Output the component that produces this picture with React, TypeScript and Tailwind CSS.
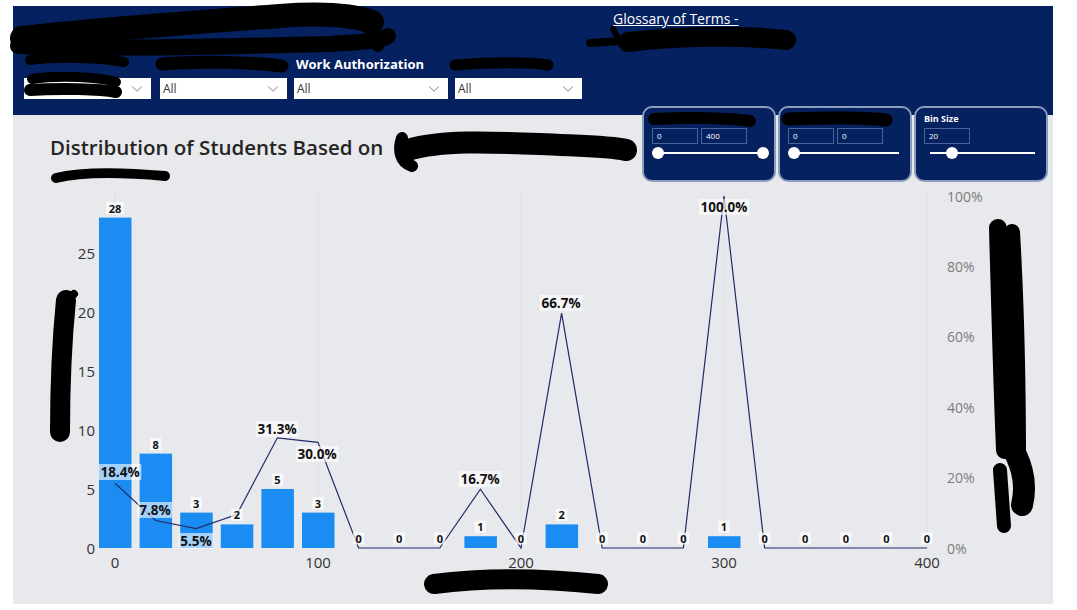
import React from "react";
import { ChevronDown } from "lucide-react";

// histogram data: bin size 20, bins 0..400
const counts = [28, 8, 3, 2, 5, 3, 0, 0, 0, 1, 0, 2, 0, 0, 0, 1, 0, 0, 0, 0, 0];
const pcts = [18.4, 7.8, 5.5, 9.5, 31.3, 30.0, 0, 0, 0, 16.7, 0, 66.7, 0, 0, 0, 100, 0, 0, 0, 0, 0];

// percent labels (page coords of label centre)
const pctLabels = [
  { t: "18.4%", x: 120, y: 472 },
  { t: "7.8%", x: 155, y: 510 },
  { t: "5.5%", x: 196, y: 541 },
  { t: "31.3%", x: 277, y: 429 },
  { t: "30.0%", x: 317, y: 454 },
  { t: "16.7%", x: 480, y: 479 },
  { t: "66.7%", x: 561, y: 303 },
  { t: "100.0%", x: 724, y: 207 },
];

// chart svg sits at page (13,185)
const OX = 13;
const OY = 185;
const X0 = 115 - OX;
const STEP = 40.6;
const BASE = 548 - OY;
const UNIT = 11.8;
const PU = 3.52;
const bx = (i: number) => X0 + STEP * i;
const py = (p: number) => BASE - p * PU;

const textW = (s: string, size: number) => {
  let w = 0;
  for (const c of s) {
    if (c === ".") w += 0.28;
    else if (c === "%") w += 0.84;
    else w += 0.58;
  }
  return w * size;
};

const Dropdown = ({ w, label }: { w: number; label?: string }) => (
  <div
    className="h-[21px] bg-white flex items-center justify-between pl-[3px] pr-[5px]"
    style={{ width: w }}
  >
    <span className="text-[12px] text-[#333] leading-none">{label}</span>
    <ChevronDown size={18} strokeWidth={1} className="text-[#555]" />
  </div>
);

const SliderCard = ({
  title,
  values,
  knobs,
  padLeft,
}: {
  title?: string;
  values: string[];
  knobs: number[];
  padLeft: number;
}) => (
  <div className="w-[134px] h-[76px] rounded-[10px] border-2 border-[#8c9dbd] bg-[#05215f] pt-[5px]">
    <div className="h-[12px] text-[9px] leading-[12px] font-bold text-white" style={{ paddingLeft: padLeft }}>
      {title}
    </div>
    <div className="mt-[3px] flex gap-[3px]" style={{ paddingLeft: padLeft }}>
      {values.map((v, i) => (
        <div
          key={i}
          className="w-[46px] h-[16px] border border-[#4a639b] text-[8px] leading-[14px] text-white pl-[4px]"
        >
          {v}
        </div>
      ))}
    </div>
    <div className="mt-[3px] ml-[14px] w-[105px] h-[12px] relative">
      <div className="absolute left-0 right-0 top-[5px] h-[1.5px] bg-white" />
      {knobs.map((k, i) => (
        <div
          key={i}
          className="absolute top-0 w-[12px] h-[12px] rounded-full bg-white -ml-[6px]"
          style={{ left: `${k * 100}%` }}
        />
      ))}
    </div>
  </div>
);

const Chart = () => (
  <svg width={1040} height={400} className="block" fontFamily="Open Sans, sans-serif">
    {/* gridlines */}
    {[0, 5, 10, 15, 20].map((i) => (
      <line key={i} x1={bx(i)} x2={bx(i)} y1={4} y2={BASE} stroke="#dcdee2" strokeWidth={1} />
    ))}
    {/* bars */}
    {counts.map((c, i) =>
      c > 0 ? (
        <rect key={i} x={bx(i) - 16} y={BASE - c * UNIT} width={32.5} height={c * UNIT} fill="#1b8df2" />
      ) : null
    )}
    {/* line */}
    <polyline
      points={pcts.map((p, i) => `${bx(i)},${py(p)}`).join(" ")}
      fill="none"
      stroke="#24296b"
      strokeWidth={1.2}
      strokeLinejoin="miter"
    />
    {/* count labels */}
    {counts.map((c, i) => {
      const s = String(c);
      const w = textW(s, 11) + 5;
      const cy = BASE - c * UNIT - 9.5;
      return (
        <g key={i}>
          <rect x={bx(i) - w / 2} y={cy - 6} width={w} height={12} fill="#ffffff" fillOpacity={0.7} />
          <text x={bx(i)} y={cy} textAnchor="middle" dominantBaseline="central" fontSize={11} fontWeight={700} fill="#111">
            {s}
          </text>
        </g>
      );
    })}
    {/* percent labels */}
    {pctLabels.map((l, i) => {
      const w = textW(l.t, 13.5) + 4;
      const x = l.x - OX;
      const y = l.y - OY;
      return (
        <g key={i}>
          <rect x={x - w / 2} y={y - 8} width={w} height={16} fill="#ffffff" fillOpacity={0.6} />
          <text x={x} y={y} textAnchor="middle" dominantBaseline="central" fontSize={13.5} fontWeight={700} fill="#111">
            {l.t}
          </text>
        </g>
      );
    })}
    {/* left axis */}
    {[0, 5, 10, 15, 20, 25].map((v) => (
      <text key={v} x={95 - OX} y={BASE - v * UNIT} textAnchor="end" dominantBaseline="central" fontSize={15} fill="#333">
        {v}
      </text>
    ))}
    {/* x axis */}
    {[0, 100, 200, 300, 400].map((v, k) => (
      <text key={v} x={bx(k * 5)} y={562 - OY} textAnchor="middle" dominantBaseline="central" fontSize={15} fill="#333">
        {v}
      </text>
    ))}
    {/* right axis */}
    {[0, 20, 40, 60, 80, 100].map((v) => (
      <text key={v} x={947 - OX} y={py(v)} dominantBaseline="central" fontSize={14} fill="#7d7d7d">
        {v}%
      </text>
    ))}
  </svg>
);

// black marker redactions drawn over the screenshot
const Redactions = () => (
  <svg className="absolute inset-0 pointer-events-none" width={1077} height={610}>
    <g stroke="#000" strokeLinecap="round" strokeLinejoin="round" fill="none">
      <path d="M22 38 C 90 30, 200 22, 280 16 C 320 13, 350 14, 372 22" strokeWidth={24} />
      <path d="M18 46 C 110 50, 230 46, 330 44 C 360 42, 380 42, 388 36" strokeWidth={16} />
      <path d="M340 14 C 360 16, 372 30, 378 46" strokeWidth={12} />
      <path d="M30 60 C 60 56, 100 58, 124 62" strokeWidth={10} />
      <path d="M32 79 C 60 75, 100 77, 116 82" strokeWidth={10} />
      <path d="M30 90 C 60 88, 100 89, 116 92" strokeWidth={12} />
      <path d="M162 64 C 200 61, 250 62, 282 66" strokeWidth={13} />
      <path d="M455 65 C 490 62, 530 62, 548 65" strokeWidth={11} />
      <path d="M590 43 C 620 41, 640 40, 660 39" strokeWidth={8} />
      <path d="M628 42 C 680 36, 740 35, 786 40" strokeWidth={20} />
      <path d="M613 29 L 618 38" strokeWidth={6} />
      <path d="M408 150 C 440 140, 490 142, 540 144 C 580 146, 610 146, 626 150" strokeWidth={22} />
      <path d="M402 138 C 398 150, 400 162, 412 166" strokeWidth={12} />
      <path d="M56 178 C 80 172, 120 172, 165 176" strokeWidth={10} />
      <path d="M66 300 C 62 340, 60 380, 60 432" strokeWidth={20} />
      <path d="M70 298 L 74 294" strokeWidth={8} />
      <path d="M998 228 C 1000 300, 1002 380, 1005 450" strokeWidth={18} />
      <path d="M1012 232 C 1016 300, 1018 380, 1018 460" strokeWidth={16} />
      <path d="M1008 440 C 1020 460, 1028 480, 1022 505" strokeWidth={22} />
      <path d="M1000 470 L 1004 526" strokeWidth={14} />
      <path d="M434 584 C 480 578, 540 578, 598 584" strokeWidth={20} />
      <path d="M654 119 C 690 117, 730 118, 750 121" strokeWidth={12} />
      <path d="M788 119 C 830 117, 870 118, 886 120" strokeWidth={13} />
    </g>
  </svg>
);

export default function App() {
  return (
    <div className="relative w-[1077px] h-[610px] bg-white overflow-hidden font-['Open_Sans',sans-serif]">
      <div className="ml-[13px] pt-[6px] w-[1040px]">
        {/* banner */}
        <div className="h-[109px] bg-[#05215f] flex flex-col">
          <div className="h-[48px] pl-[600px]">
            <span className="text-white text-[14px] leading-[22px] underline">Glossary of Terms -</span>
          </div>
          <div className="h-[22px] pl-[283px] flex items-center">
            <span className="text-white text-[13px] font-bold">Work Authorization</span>
          </div>
          <div className="mt-[2px] pl-[11px] flex">
            <Dropdown w={127} />
            <div className="ml-[9px]">
              <Dropdown w={127} label="All" />
            </div>
            <div className="ml-[7px]">
              <Dropdown w={154} label="All" />
            </div>
            <div className="ml-[7px]">
              <Dropdown w={127} label="All" />
            </div>
          </div>
        </div>
        {/* report canvas */}
        <div className="bg-[#e8e9ed] h-[489px]">
          <div className="flex h-[70px]">
            <h1 className="pl-[37px] pt-[19px] text-[20.5px] leading-[26px] font-semibold text-[#252423]">
              Distribution of Students Based on
            </h1>
            <div className="ml-auto mr-[5px] -mt-[9px] flex gap-[2px] h-[76px]">
              <SliderCard values={["0", "400"]} knobs={[0, 1]} padLeft={8} />
              <SliderCard values={["0", "0"]} knobs={[0]} padLeft={8} />
              <SliderCard title="Bin Size" values={["20"]} knobs={[0.21]} padLeft={8} />
            </div>
          </div>
          <Chart />
        </div>
      </div>
      <Redactions />
    </div>
  );
}
